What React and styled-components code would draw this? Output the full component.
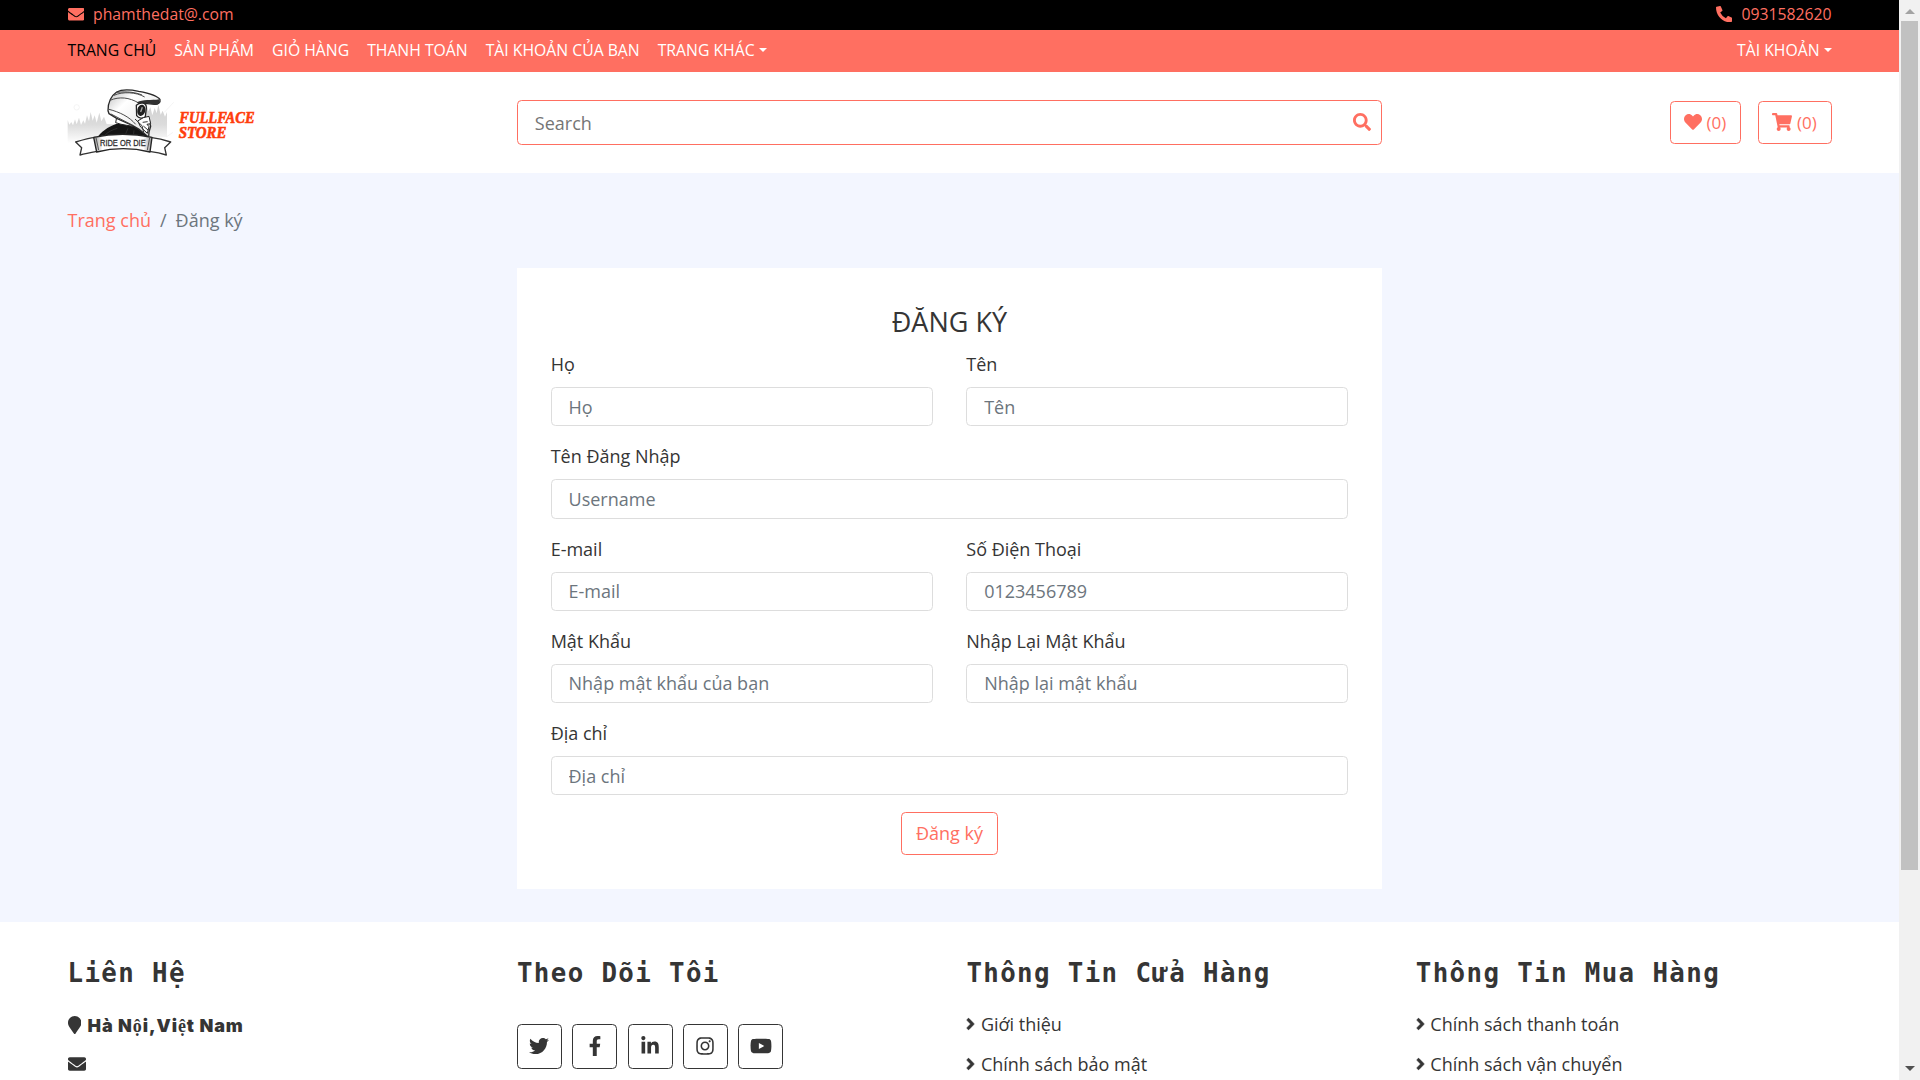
import React from "react";
import styled, { createGlobalStyle } from "styled-components";
import {
  FaEnvelope, FaPhoneAlt, FaSearch, FaHeart, FaShoppingCart, FaMapMarker,
  FaTwitter, FaFacebookF, FaLinkedinIn, FaInstagram, FaYoutube, FaAngleRight,
} from "react-icons/fa";

const accent = "#ff6f61";
const ink = "#353535";

const GlobalStyle = createGlobalStyle`
  *, *::before, *::after { box-sizing: border-box; }
  body {
    margin: 0;
    overflow: hidden;
    background: #fff;
    color: ${ink};
    font: 400 18px/27px "Open Sans", sans-serif;
  }
  svg { display: block; flex: none; }
`;

const Shell = styled.div`
  display: grid;
  grid-template-columns: 1fr 21px;
  height: 1080px;
  overflow: hidden;
`;
const Page = styled.div`
  min-width: 0;
  height: 1080px;
  overflow: hidden;
`;
const TopBar = styled.div`
  display: flex;
  justify-content: space-between;
  align-items: center;
  height: 30px;
  padding: 0 67.5px 2px;
  background: #000;
  color: ${accent};
  font-size: 15.75px;
`;
const Contact = styled.div`
  display: flex;
  align-items: center;
  gap: 9px;
`;
const Nav = styled.nav`
  display: flex;
  justify-content: space-between;
  align-items: center;
  height: 42px;
  padding: 0 67.5px 2px;
  background: ${accent};
`;
const NavGroup = styled.div`
  display: flex;
  gap: 18px;
`;
const NavLink = styled.a`
  display: flex;
  align-items: center;
  gap: 4px;
  color: ${(p) => (p.$active ? "#000" : "#fff")};
  font-size: 15.75px;
  line-height: 24px;
  white-space: nowrap;
`;
const Caret = styled.span`
  border: 4px solid transparent;
  border-top-color: currentColor;
  border-bottom: 0;
`;
const Header = styled.header`
  display: grid;
  grid-template-columns: 415.7px 865px 1fr;
  column-gap: 33.75px;
  align-items: center;
  height: 100.7px;
  padding: 0 67.5px;
`;
const LogoMark = styled.svg`
  overflow: visible;
`;
const SearchBox = styled.div`
  display: flex;
  align-items: center;
  justify-content: space-between;
  height: 45px;
  padding: 0 10px 0 16.9px;
  border: 1px solid ${accent};
  border-radius: 4.5px;
  color: ${accent};
`;
const SearchInput = styled.input`
  flex: 1;
  padding: 2px 0 0;
  border: 0;
  outline: 0;
  font: inherit;
  &::placeholder { color: #757575; opacity: 1; }
`;
const Actions = styled.div`
  display: flex;
  justify-content: flex-end;
  gap: 17px;
`;
const OutlineButton = styled.button`
  display: flex;
  align-items: center;
  justify-content: center;
  gap: 4.8px;
  width: ${(p) => p.$width}px;
  height: 43px;
  padding: 0;
  border: 1px solid ${accent};
  border-radius: 4.5px;
  background: #fff;
  color: ${accent};
  font: 400 ${(p) => p.$size || 18}px/27px "Open Sans", sans-serif;
`;
const Main = styled.main`
  height: 749.3px;
  background: #f3f6ff;
  padding: 34.75px 67.5px 33.75px;
`;
const Breadcrumb = styled.div`
  display: flex;
  gap: 9px;
  height: 60.5px;
  color: #6c757d;
`;
const Crumb = styled.a`
  color: ${accent};
`;
const Card = styled.form`
  width: 865px;
  height: 621px;
  margin-left: 449.4px;
  padding: 33.75px;
  background: #fff;
`;
const Title = styled.h1`
  margin: 0 0 8.95px;
  padding-top: 0.3px;
  font-size: 27px;
  line-height: 40.2px;
  font-weight: 400;
  text-align: center;
`;
const Fields = styled.div`
  display: grid;
  grid-template-columns: 1fr 1fr;
  column-gap: 33.75px;
`;
const Field = styled.label`
  display: block;
  grid-column: ${(p) => (p.$wide ? "1 / -1" : "auto")};
  height: 92.22px;
`;
const Input = styled.input`
  display: block;
  width: 100%;
  height: 39.34px;
  margin-top: 9px;
  padding: 0 16.9px;
  border: 1px solid #ddd;
  border-radius: 4.5px;
  outline: 0;
  font: inherit;
  &::placeholder { color: #6c757d; opacity: 1; }
`;
const Submit = styled.div`
  display: flex;
  justify-content: center;
`;
const Footer = styled.footer`
  display: grid;
  grid-template-columns: repeat(4, 1fr);
  column-gap: 33.75px;
  padding: 34px 67.5px 0;
`;
const FooterTitle = styled.h2`
  margin: 0 0 21px;
  font: 700 25.8px/34px "DejaVu Sans Mono", monospace;
  letter-spacing: 1.37px;
  white-space: nowrap;
`;
const FooterLine = styled.div`
  display: flex;
  align-items: center;
  gap: 5.5px;
  height: 27px;
  margin-bottom: 13px;
`;
const Chevron = styled(FaAngleRight)`
  width: 9px;
  height: 18px;
  stroke: currentColor;
  stroke-width: 14px;
`;
const Marker = styled(FaMapMarker)`
  width: 13.5px;
  height: 18px;
  margin-top: 1px;
`;
const Address = styled.span`
  font: 900 18px/27px Inter, sans-serif;
  letter-spacing: 0.9px;
  padding: 2px 0 0 1px;
  white-space: nowrap;
`;
const SerifLetter = styled.span`
  font: 700 18px/20px "Liberation Serif", serif;
`;
const Socials = styled.div`
  display: flex;
  gap: 10.3px;
  padding-top: 13px;
`;
const SocialButton = styled.a`
  display: flex;
  align-items: center;
  justify-content: center;
  width: 45px;
  height: 45px;
  border: 1px solid ${ink};
  border-radius: 4.5px;
`;
const Scrollbar = styled.div`
  display: flex;
  flex-direction: column;
  align-items: center;
  justify-content: space-between;
  height: 1080px;
  background: #f1f1f1;
`;
const ScrollTrack = styled.div`
  flex: 1;
  width: 17px;
`;
const ScrollThumb = styled.div`
  height: 849px;
  background: #c1c1c1;
`;
const ScrollArrow = styled.div`
  display: flex;
  align-items: center;
  justify-content: center;
  height: 21px;
  padding-top: ${(p) => (p.$down ? 0 : 2)}px;
  padding-bottom: ${(p) => (p.$down ? 3 : 0)}px;
  &::before {
    content: "";
    border: 5px solid transparent;
    ${(p) => (p.$down ? "border-top-color: #505050; border-bottom: 0;" : "border-bottom-color: #a3a3a3; border-top: 0;")}
  }
`;

function Logo() {
  return (
    <LogoMark width="188" height="75" viewBox="55 30 564 225">
      <defs>
        <linearGradient id="mist" x1="0" y1="0" x2="0" y2="1">
          <stop offset="0" stopColor="#cfcfcf" />
          <stop offset="0.55" stopColor="#dcdcdc" />
          <stop offset="1" stopColor="#fff" />
        </linearGradient>
        <linearGradient id="shell" x1="0" y1="0" x2="1" y2="1">
          <stop offset="0" stopColor="#b9b9b9" />
          <stop offset="0.3" stopColor="#fff" />
          <stop offset="1" stopColor="#ddd" />
        </linearGradient>
        <linearGradient id="ribbon">
          <stop offset="0" stopColor="#999" />
          <stop offset="0.15" stopColor="#fff" />
          <stop offset="0.85" stopColor="#fff" />
          <stop offset="1" stopColor="#999" />
        </linearGradient>
      </defs>
      <path fill="url(#mist)" d="M54 205V135l5 14 6-8 5 10 6-18 5 15 7-20 6 22 7-14 5 10 6-25 6 18 5-28 6 26 6-16 6 22 8-30 6 26 8-14 8 22 90 5 12-45 6-14 5 24 5-36 7 28 6-12 6 24 7-22 6 16 5-26 7 30 6-12 7 18 6-14v75z" />
      <g fill="none" stroke="#eee" strokeWidth="2">
        <circle cx="81" cy="97" r="8" /><path d="M344 112l28-30M350 186l20-14" />
      </g>
      <path fill="#151515" d="M143 188c8-16 32-33 58-42l70 3 27 39v8H143z" />
      <path fill="#fff" stroke="#222" strokeWidth="3" d="M201 127l-3 16c20 8 45 8 64 14l14 14-3-24-30-18z" />
      <g stroke="#444" strokeWidth="1.5" fill="none"><path d="M166 180c12-11 23-16 37-20M235 160l-8 19M253 166l-2 16" /></g>
      <path fill="url(#shell)" stroke="#292929" strokeWidth="4" strokeLinejoin="round" d="M175 107c0-27 10-45 26-56 16-9 43-7 66-2 28 5 58 14 64 25 2 8-5 14-15 14l-31-3-14 11 2 26 12 13 14 1 4 18-5 17-1 16-27-23-22-13-47-21-23-14z" />
      <path fill="none" stroke="#4a4a4a" strokeWidth="3" d="M181 76c28-12 58-9 86 8l64-4M178 103c31 8 61 22 80 45M193 61c25-12 67-10 92 5M202 52c30-3 57 0 75 8M184 117l65 34" />
      <path fill="#303030" d="M262 82c18-9 41-5 67-9 4 10-3 17-13 16l-26-5-21 6z" />
      <path fill="#fff" stroke="#252525" strokeWidth="4" d="M260 91c13-12 31-8 30 8l-3 26c-8 7-20 5-26-3z" />
      <ellipse cx="275" cy="106" rx="12" ry="17" fill="#202020" transform="rotate(12 275 106)" />
      <path fill="none" stroke="#aaa" strokeWidth="4" d="M278 97l-5 14" />
      <path fill="#fff" stroke="#252525" strokeWidth="3" d="M281 128l17-4 5 22-11 2 6 7-5 20-20-19-9-18z" />
      <path d="M256 132l21 20 5 20M279 142l15-2M281 153l14 12" fill="none" stroke="#333" strokeWidth="3" />
      <path fill="#fff" stroke="#333" strokeWidth="4" strokeLinejoin="round" d="M137 187c-21 2-40 8-59 14l18 17-5 22c17-5 34-8 51-11zM302 187c21 2 42 7 61 14l-18 17 5 22c-17-6-34-9-51-11z" />
      <path fill="url(#ribbon)" stroke="#252525" strokeWidth="4" strokeLinejoin="round" d="M132 187c57-12 117-12 175 0l-6 44c-52-13-109-13-160 0z" />
      <path fill="none" stroke="#555" strokeWidth="3" d="M139 188l8 37M300 188l-7 37" />
      <text x="151" y="213" textLength="137" lengthAdjust="spacingAndGlyphs" fontFamily="Liberation Sans, sans-serif" fontSize="28" fill="#303030" stroke="#303030" strokeWidth=".9">RIDE OR DIE</text>
      <g fill="#ff3d0c" stroke="#ff3d0c" strokeWidth="1.8" fontFamily="Liberation Serif, serif" fontWeight="700" fontStyle="italic" fontSize="47">
        <text x="389" y="143" textLength="226" lengthAdjust="spacingAndGlyphs">FULLFACE</text>
        <text x="387" y="188" textLength="143" lengthAdjust="spacingAndGlyphs">STORE</text>
      </g>
    </LogoMark>
  );
}

const fields = [
  { label: "Họ", placeholder: "Họ" },
  { label: "Tên", placeholder: "Tên" },
  { label: "Tên Đăng Nhập", placeholder: "Username", wide: true },
  { label: "E-mail", placeholder: "E-mail" },
  { label: "Số Điện Thoại", placeholder: "0123456789" },
  { label: "Mật Khẩu", placeholder: "Nhập mật khẩu của bạn" },
  { label: "Nhập Lại Mật Khẩu", placeholder: "Nhập lại mật khẩu" },
  { label: "Địa chỉ", placeholder: "Địa chỉ", wide: true },
];
const socials = [[FaTwitter, 20], [FaFacebookF, 20], [FaLinkedinIn, 20], [FaInstagram, 20], [FaYoutube, 22]];
const linkColumns = [
  ["Thông Tin Cửa Hàng", ["Giới thiệu", "Chính sách bảo mật"]],
  ["Thông Tin Mua Hàng", ["Chính sách thanh toán", "Chính sách vận chuyển"]],
];

export default function App() {
  return (
    <Shell>
      <GlobalStyle />
      <Page>
        <TopBar>
          <Contact><FaEnvelope size={16.5} />phamthedat@.com</Contact>
          <Contact><FaPhoneAlt size={16.5} />0931582620</Contact>
        </TopBar>
        <Nav>
          <NavGroup>
            <NavLink $active>TRANG CHỦ</NavLink>
            <NavLink>SẢN PHẨM</NavLink>
            <NavLink>GIỎ HÀNG</NavLink>
            <NavLink>THANH TOÁN</NavLink>
            <NavLink>TÀI KHOẢN CỦA BẠN</NavLink>
            <NavLink>TRANG KHÁC<Caret /></NavLink>
          </NavGroup>
          <NavLink>TÀI KHOẢN<Caret /></NavLink>
        </Nav>
        <Header>
          <Logo />
          <SearchBox>
            <SearchInput placeholder="Search" />
            <FaSearch size={18} />
          </SearchBox>
          <Actions>
            <OutlineButton type="button" $width={71} $size={17}><FaHeart size={18} /><span>(0)</span></OutlineButton>
            <OutlineButton type="button" $width={74} $size={17}><FaShoppingCart size={20} /><span>(0)</span></OutlineButton>
          </Actions>
        </Header>
        <Main>
          <Breadcrumb><Crumb>Trang chủ</Crumb><span>/</span><span>Đăng ký</span></Breadcrumb>
          <Card>
            <Title>ĐĂNG KÝ</Title>
            <Fields>
              {fields.map((f) => (
                <Field key={f.label} $wide={f.wide}>{f.label}<Input placeholder={f.placeholder} /></Field>
              ))}
            </Fields>
            <Submit><OutlineButton type="button" $width={97}>Đăng ký</OutlineButton></Submit>
          </Card>
        </Main>
        <Footer>
          <div>
            <FooterTitle>Liên Hệ</FooterTitle>
            <FooterLine><Marker />
              <Address>Hà N<SerifLetter>ộ</SerifLetter>i,Vi<SerifLetter>ệ</SerifLetter>t Nam</Address>
            </FooterLine>
            <FooterLine><FaEnvelope size={18} /></FooterLine>
          </div>
          <div>
            <FooterTitle>Theo Dõi Tôi</FooterTitle>
            <Socials>
              {socials.map(([Icon, size], i) => <SocialButton key={i}><Icon size={size} /></SocialButton>)}
            </Socials>
          </div>
          {linkColumns.map(([title, links]) => (
            <div key={title}>
              <FooterTitle>{title}</FooterTitle>
              {links.map((l) => <FooterLine key={l}><Chevron />{l}</FooterLine>)}
            </div>
          ))}
        </Footer>
      </Page>
      <Scrollbar>
        <ScrollArrow />
        <ScrollTrack><ScrollThumb /></ScrollTrack>
        <ScrollArrow $down />
      </Scrollbar>
    </Shell>
  );
}
